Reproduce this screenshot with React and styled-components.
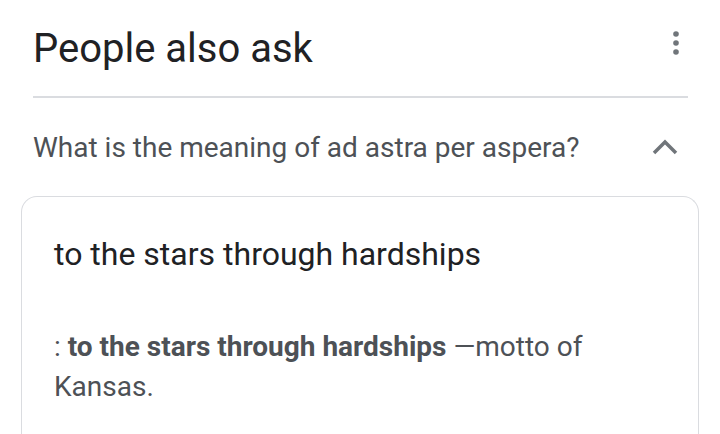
import React from "react";
import styled, { createGlobalStyle } from "styled-components";

const GlobalStyle = createGlobalStyle`
  html, body {
    margin: 0;
    padding: 0;
    background: #fff;
    font-family: Roboto, "Liberation Sans", Arial, sans-serif;
    overflow: hidden;
  }
`;

const Page = styled.div`
  width: 720px;
  height: 434px;
  overflow: hidden;
  box-sizing: border-box;
  padding: 0 32px 0 21px;
`;

const Header = styled.div`
  display: flex;
  align-items: center;
  justify-content: space-between;
  height: 98px;
  margin-left: 12px;
  border-bottom: 2px solid #dadce0;
  box-sizing: border-box;
`;

const Title = styled.h2`
  margin: 0;
  font-size: 40px;
  font-weight: 400;
  color: #202124;
  letter-spacing: 0;
`;

const MenuButton = styled.button`
  align-self: flex-start;
  border: none;
  background: none;
  padding: 0;
  margin: 31px 9px 0 0;
  display: flex;
  cursor: pointer;
`;

const Question = styled.div`
  display: flex;
  align-items: center;
  justify-content: space-between;
  height: 98px;
  margin-left: 12px;
  font-size: 28px;
  color: #4d5156;
`;

const Chevron = styled.span`
  display: flex;
  margin-right: 10px;
`;

const Card = styled.div`
  margin-right: -11px;
  border: 1.5px solid #dadce0;
  border-bottom: none;
  border-radius: 16px 16px 0 0;
  padding: 37px 32px 0 32px;
  height: 300px;
  box-sizing: border-box;
`;

const Answer = styled.div`
  font-size: 32px;
  color: #202124;
  line-height: 40px;
`;

const Snippet = styled.p`
  margin: 53px 0 0;
  font-size: 28px;
  line-height: 40px;
  color: #4d5156;
  max-width: 580px;

  b {
    font-weight: 700;
  }
`;

export default function App() {
  return (
    <>
      <GlobalStyle />
      <Page>
        <Header>
          <Title>People also ask</Title>
          <MenuButton aria-label="More options">
            <svg width="6" height="24" viewBox="0 0 6 24">
              <circle cx="3" cy="3" r="2.8" fill="#70757a" />
              <circle cx="3" cy="12" r="2.8" fill="#70757a" />
              <circle cx="3" cy="21" r="2.8" fill="#70757a" />
            </svg>
          </MenuButton>
        </Header>
        <Question>
          What is the meaning of ad astra per aspera?
          <Chevron>
            <svg width="26" height="16" viewBox="0 0 26 16">
              <path d="M2 14 L13 3 L24 14" fill="none" stroke="#70757a" strokeWidth="3.5" />
            </svg>
          </Chevron>
        </Question>
        <Card>
          <Answer>to the stars through hardships</Answer>
          <Snippet>
            : <b>to the stars through hardships</b> —motto of Kansas.
          </Snippet>
        </Card>
      </Page>
    </>
  );
}
